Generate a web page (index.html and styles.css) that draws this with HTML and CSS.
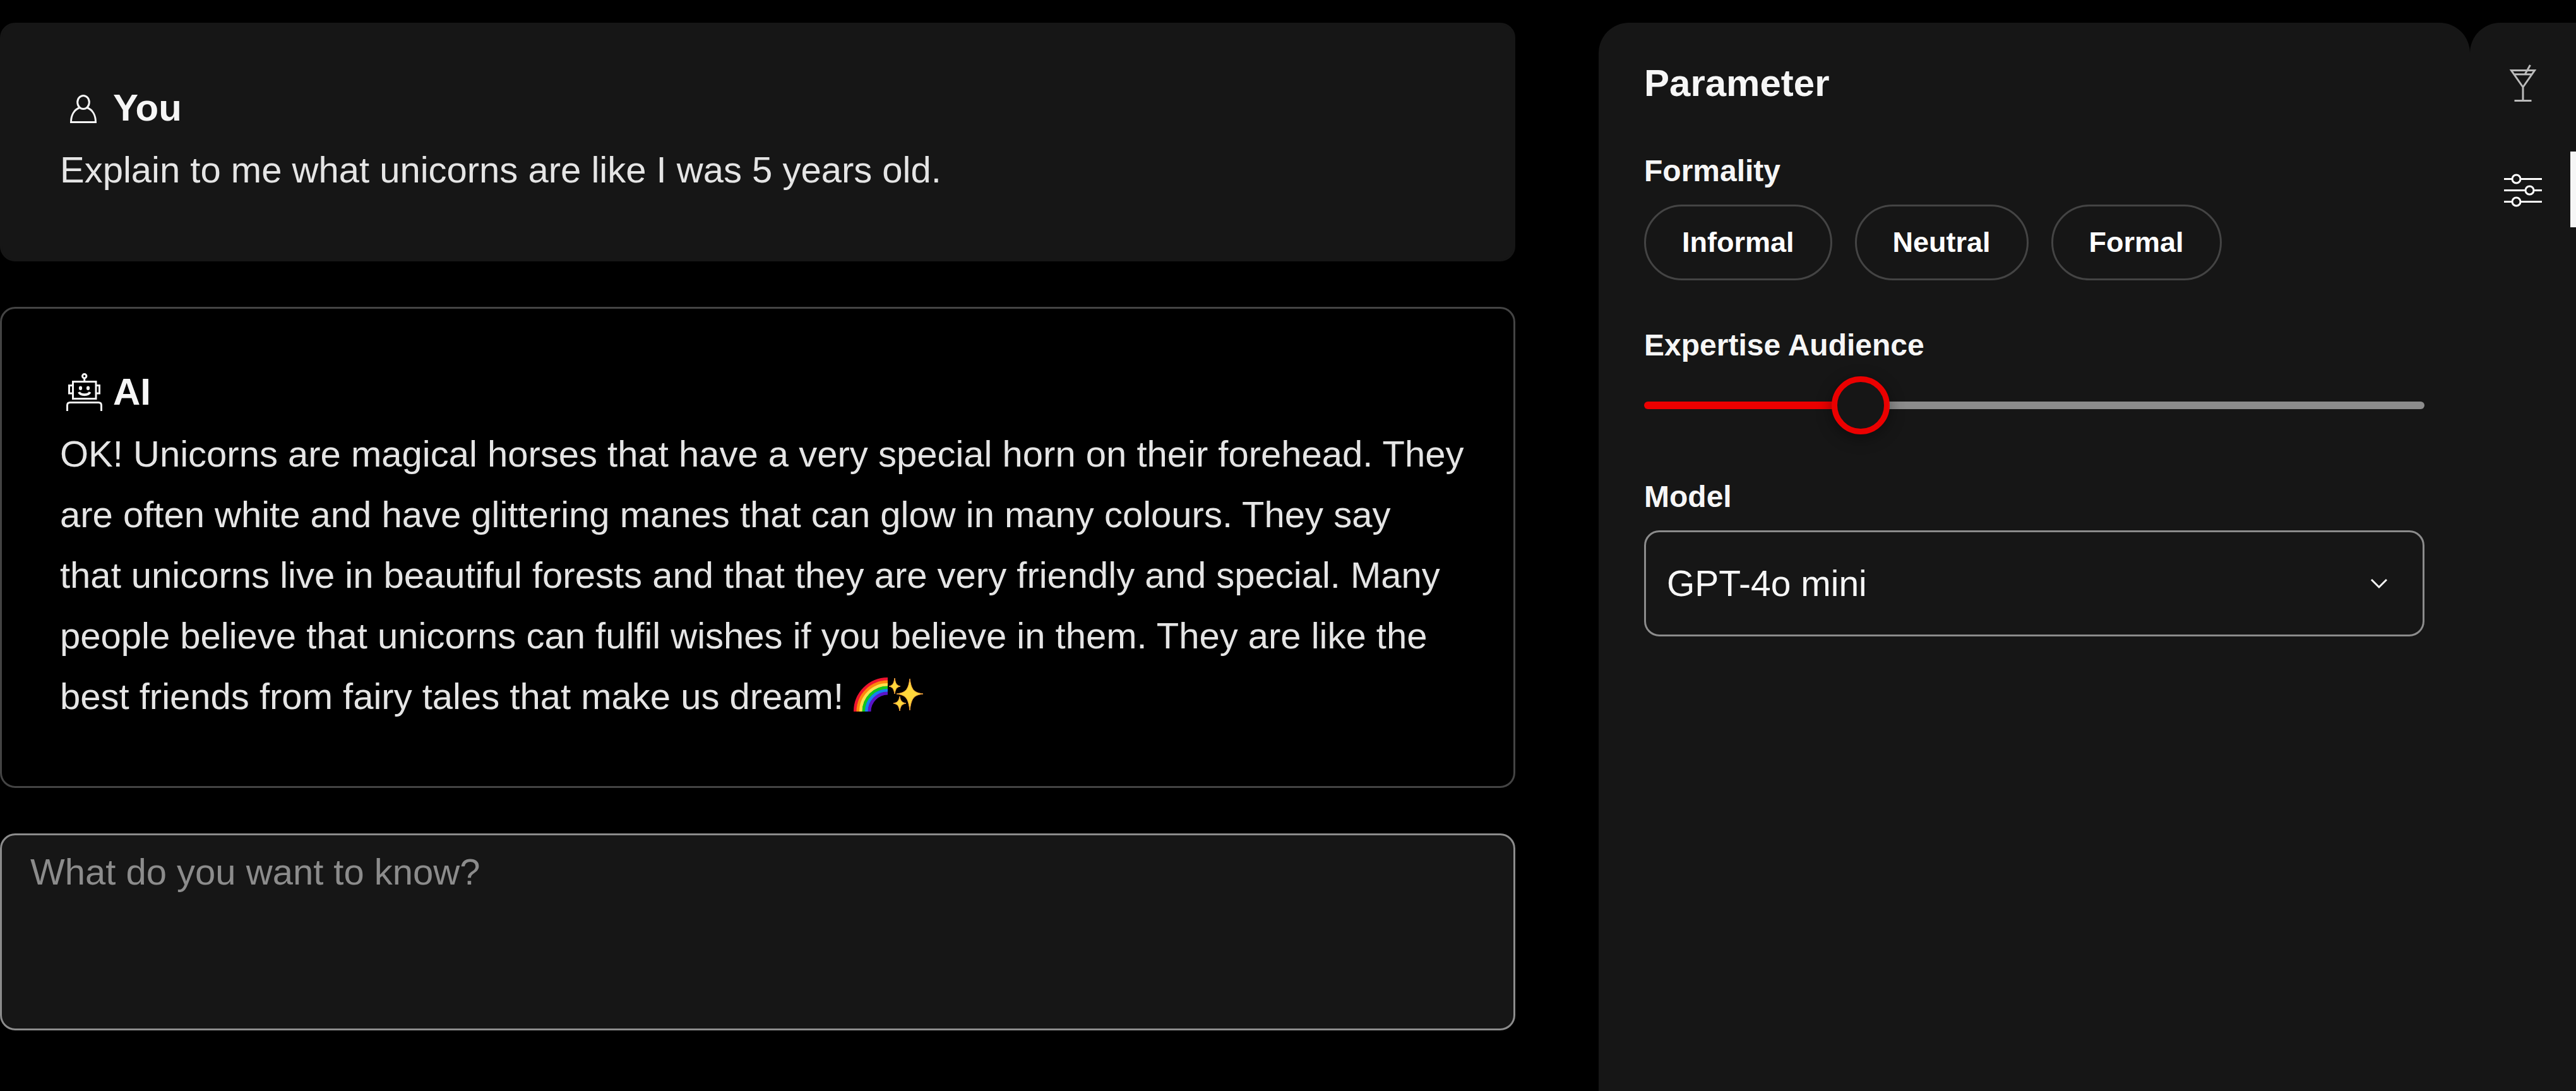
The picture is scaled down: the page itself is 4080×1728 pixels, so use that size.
FILE: index.html
```html
<!DOCTYPE html>
<html lang="en">
<head>
<meta charset="utf-8">
<meta name="viewport" content="width=device-width, initial-scale=1">
<title>AI Chat</title>
<link rel="stylesheet" href="styles.css">
</head>
<body>
<div class="layout">
  <main class="chat">
    <article class="card card-user">
      <h2 class="card-title">
        <svg class="icon" viewBox="0 0 72 72" aria-hidden="true"><ellipse cx="37" cy="27" rx="9.300" ry="10.500"/><path d="M31 35.500C22 39 17.500 48 17.500 58.500H56.500C56.500 48 52 39 43 35.500"/></svg>
        You
      </h2>
      <p class="card-text">Explain to me what unicorns are like I was 5 years old.</p>
    </article>

    <article class="card card-ai">
      <h2 class="card-title">
        <svg class="icon" viewBox="0 0 72 72" aria-hidden="true"><path d="M20.500 19.500H57V46.500H20.500ZM20.500 25.500H14.500V38H20.500M57 25.500H62.500V38H57M38.700 18V14M11.500 66V57Q11.500 52.500 16 52.500H61Q65.500 52.500 65.500 57V66"/><circle cx="38.700" cy="10.700" r="3.200"/><path stroke-width="4" d="M30 36C32.500 41.500 45 41.500 47.500 36"/><ellipse class="solid" cx="32.500" cy="29.800" rx="2.600" ry="3.200"/><ellipse class="solid" cx="44.500" cy="29.800" rx="2.600" ry="3.200"/></svg>
        AI
      </h2>
      <p class="card-text">OK! Unicorns are magical horses that have a very special horn on their forehead. They<br>are often white and have glittering manes that can glow in many colours. They say<br>that unicorns live in beautiful forests and that they are very friendly and special. Many<br>people believe that unicorns can fulfil wishes if you believe in them. They are like the<br>best friends from fairy tales that make us dream! <svg class="emoji" viewBox="0 0 54 54" role="img" aria-label="rainbow"><g fill="none" stroke-width="5"><path stroke="#f0142f" d="M2.500 54A51.500 51.500 0 0 1 54 2.500"/><path stroke="#ff8a0c" d="M7 54A47 47 0 0 1 54 7"/><path stroke="#ffe14a" d="M11.500 54A42.500 42.500 0 0 1 54 11.500"/><path stroke="#12c81e" d="M16 54A38 38 0 0 1 54 16"/><path stroke="#1580f0" d="M20.500 54A33.500 33.500 0 0 1 54 20.500"/><path stroke="#5a14c8" d="M25 54A29 29 0 0 1 54 25"/></g></svg><svg class="emoji" viewBox="0 0 54 54" role="img" aria-label="sparkles"><g fill="#ffd83b" stroke="#f7a13c" stroke-width="1"><path d="M33 2C35.500 19 39 24 54 26C39 28 35.500 33 33 52C30.500 33 27 28 12 26C27 24 30.500 19 33 2Z"/><path d="M9 1C10.500 10 12 12.500 18 14C12 15.500 10.500 18 9 26C7.500 18 6 15.500 0 14C6 12.500 7.500 10 9 1Z"/><path d="M17 30C18.500 37 20 39.500 27 41C20 42.500 18.500 45 17 53C15.500 45 14 42.500 7 41C14 39.500 15.500 37 17 30Z"/></g></svg></p>
    </article>

    <textarea class="prompt" aria-label="Your question" placeholder="What do you want to know?"></textarea>
  </main>

  <aside class="panel">
    <h2 class="panel-title">Parameter</h2>

    <div class="field" role="group" aria-labelledby="formality-label">
      <h3 class="field-label" id="formality-label">Formality</h3>
      <div class="chips">
        <button class="chip" type="button">Informal</button>
        <button class="chip" type="button">Neutral</button>
        <button class="chip" type="button">Formal</button>
      </div>
    </div>

    <div class="field">
      <label class="field-label" for="expertise">Expertise Audience</label>
      <input class="slider" id="expertise" type="range" min="0" max="100" value="26" style="--fill: 27%">
    </div>

    <div class="field">
      <label class="field-label" for="model">Model</label>
      <div class="select-wrap">
        <select class="select" id="model"><option>GPT-4o mini</option></select>
        <svg class="chevron" viewBox="0 0 28 18" aria-hidden="true"><path d="M2 3l12 12L26 3"/></svg>
      </div>
    </div>
  </aside>

  <nav class="rail" aria-label="Tools">
    <button class="rail-button" type="button" aria-label="Cocktails">
      <svg class="icon" viewBox="0 0 72 72" aria-hidden="true"><path d="M17.500 15.500H54.500L36 42ZM21.500 21.700H50.500M39.500 21L47.500 7M36 42V63M22.500 63.500H49.500"/></svg>
    </button>
    <button class="rail-button active" type="button" aria-label="Parameters">
      <svg class="icon" viewBox="0 0 72 72" aria-hidden="true"><path d="M6 19.500H18.500M32.500 19.500H66M6 37.500H39.500M53.500 37.500H66M6 55.500H18.500M32.500 55.500H66"/><circle cx="25.500" cy="19.500" r="6.500"/><circle cx="46.500" cy="37.500" r="6.500"/><circle cx="25.500" cy="55.500" r="6.500"/></svg>
    </button>
  </nav>
</div>
</body>
</html>
```
FILE: styles.css
```css
:root {
  --surface: #161616;
  --line: #444;
  --line-strong: #8c8c8c;
  --text: #f6f6f6;
  --text-soft: #e5e5e5;
  --accent: #eb0000;
}

* {
  box-sizing: border-box;
}

body {
  margin: 0;
  background: #000;
  color: var(--text);
  font-family: "Liberation Sans", Arial, sans-serif;
}

h2,
h3,
p {
  margin: 0;
}

button,
select,
textarea {
  font-family: inherit;
}

.layout {
  display: grid;
  grid-template-columns: minmax(0, 1fr) 1380px 168px;
  min-height: 100vh;
  padding-top: 36px;
}

.chat {
  display: flex;
  flex-direction: column;
  gap: 72px;
  margin-right: 132px;
}

.card {
  padding: 82px 60px 94px 92px;
  border: 3px solid var(--surface);
  border-radius: 24px;
}

.card-user {
  background: var(--surface);
}

.card-ai {
  border-color: var(--line);
}

.card-title {
  display: flex;
  align-items: center;
  gap: 12px;
  font-size: 60px;
  line-height: 100px;
}

.card-text {
  color: var(--text-soft);
  font-size: 58px;
  line-height: 96px;
}

.icon {
  flex: none;
  width: 72px;
  height: 72px;
  fill: none;
  stroke: currentColor;
  stroke-width: 3;
}

.solid {
  fill: currentColor;
  stroke: none;
}

.emoji {
  width: 54px;
  height: 54px;
  margin-right: 2px;
  vertical-align: -4px;
}

.prompt {
  display: block;
  width: 100%;
  height: 312px;
  padding: 22px 45px;
  border: 3px solid var(--line-strong);
  border-radius: 24px;
  background: var(--surface);
  color: var(--text-soft);
  font-size: 58px;
  line-height: 72px;
  resize: none;
}

.prompt::placeholder {
  color: var(--line-strong);
  opacity: 1;
}

.panel {
  display: flex;
  flex-direction: column;
  gap: 72px;
  padding: 60px 72px;
  border-radius: 48px 48px 0 0;
  background: var(--surface);
}

.panel-title {
  font-size: 60px;
  line-height: 72px;
}

.field {
  display: flex;
  flex-direction: column;
  gap: 22px;
}

.field-label {
  font-size: 48px;
  font-weight: 700;
  line-height: 62px;
}

.chips {
  display: flex;
  gap: 36px;
}

.chip {
  height: 120px;
  padding: 0 57px;
  border: 3px solid var(--line);
  border-radius: 60px;
  background: transparent;
  color: #fff;
  font-size: 45px;
  font-weight: 700;
}

.slider {
  width: 100%;
  height: 84px;
  margin: 0;
  background: transparent;
  appearance: none;
}

.slider::-webkit-slider-runnable-track {
  height: 12px;
  border-radius: 6px;
  background: linear-gradient(to right, var(--accent) var(--fill), var(--line-strong) var(--fill));
}

.slider::-webkit-slider-thumb {
  width: 92px;
  height: 92px;
  margin-top: -40px;
  border: 9px solid var(--accent);
  border-radius: 50%;
  background: var(--surface);
  box-shadow: 0 6px 24px rgba(0, 0, 0, 0.4);
  appearance: none;
}

.select-wrap {
  display: grid;
  align-items: center;
}

.select,
.chevron {
  grid-area: 1 / 1;
}

.select {
  width: 100%;
  height: 168px;
  padding: 0 120px 0 33px;
  border: 3px solid var(--line-strong);
  border-radius: 24px;
  background: transparent;
  color: var(--text);
  font-size: 57px;
  appearance: none;
}

.chevron {
  justify-self: end;
  width: 28px;
  height: 18px;
  margin-right: 58px;
  fill: none;
  stroke: var(--text);
  stroke-width: 3;
  pointer-events: none;
}

.rail {
  display: flex;
  flex-direction: column;
  gap: 48px;
  padding-top: 36px;
  border-radius: 48px 0 0 0;
  background: var(--surface);
}

.rail-button {
  display: flex;
  align-items: center;
  justify-content: center;
  height: 120px;
  padding: 0;
  border: 0;
  background: transparent;
  color: #bbb;
}

.rail-button.active {
  box-shadow: inset -9px 0 0 var(--text);
  color: #fff;
}
```
